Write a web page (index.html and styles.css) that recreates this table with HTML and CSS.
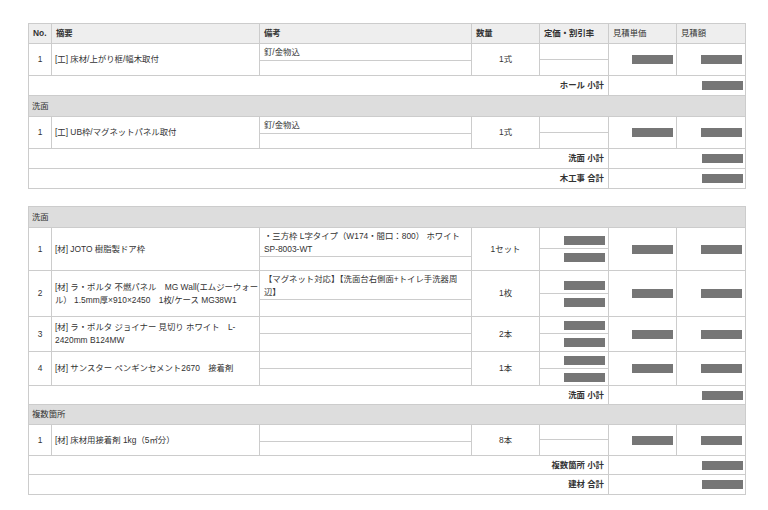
FILE: index.html
```html
<!DOCTYPE html>
<html lang="ja">
<head>
<meta charset="utf-8">
<title>見積明細</title>
<link rel="stylesheet" href="styles.css">
</head>
<body>
<div class="sheet">
  <div class="table">
    <div class="row head">
      <div class="cell">No.</div>
      <div class="cell">摘要</div>
      <div class="cell">備考</div>
      <div class="cell">数量</div>
      <div class="cell">定価・割引率</div>
      <div class="cell light">見積単価</div>
      <div class="cell light">見積額</div>
    </div>
    <div class="row item">
      <div class="cell no">1</div>
      <div class="cell desc">[工] 床材/上がり框/幅木取付</div>
      <div class="cell note"><div class="note-main">釘/金物込</div><div class="note-sub"></div></div>
      <div class="cell qty">1式</div>
      <div class="cell price"><div class="price-top"></div><div class="price-bottom"></div></div>
      <div class="cell amount"><span class="bar"></span></div>
      <div class="cell amount"><span class="bar"></span></div>
    </div>
    <div class="row sum">
      <div class="cell sum-label">ホール 小計</div>
      <div class="cell sum-value"><span class="bar"></span></div>
    </div>
    <div class="row section"><div class="cell">洗面</div></div>
    <div class="row item">
      <div class="cell no">1</div>
      <div class="cell desc">[工] UB枠/マグネットパネル取付</div>
      <div class="cell note"><div class="note-main">釘/金物込</div><div class="note-sub"></div></div>
      <div class="cell qty">1式</div>
      <div class="cell price"><div class="price-top"></div><div class="price-bottom"></div></div>
      <div class="cell amount"><span class="bar"></span></div>
      <div class="cell amount"><span class="bar"></span></div>
    </div>
    <div class="row sum">
      <div class="cell sum-label">洗面 小計</div>
      <div class="cell sum-value"><span class="bar"></span></div>
    </div>
    <div class="row sum">
      <div class="cell sum-label">木工事 合計</div>
      <div class="cell sum-value"><span class="bar"></span></div>
    </div>
  </div>

  <div class="table">
    <div class="row section"><div class="cell">洗面</div></div>
    <div class="row item">
      <div class="cell no">1</div>
      <div class="cell desc">[材] JOTO 樹脂製ドア枠</div>
      <div class="cell note"><div class="note-main">・三方枠 L字タイプ（W174・間口：800） ホワイト <span class="nowrap">SP-8003-WT</span></div><div class="note-sub"></div></div>
      <div class="cell qty">1セット</div>
      <div class="cell price"><div class="price-top"><span class="bar"></span></div><div class="price-bottom"><span class="bar"></span></div></div>
      <div class="cell amount"><span class="bar"></span></div>
      <div class="cell amount"><span class="bar"></span></div>
    </div>
    <div class="row item item-tall">
      <div class="cell no">2</div>
      <div class="cell desc"><div><span class="nowrap">[材] ラ・ポルタ 不燃パネル　MG Wall(エムジーウォー</span><br>ル）&nbsp;1.5mm厚×910×2450　1枚/ケース MG38W1</div></div>
      <div class="cell note"><div class="note-main">【マグネット対応】【洗面台右側面+トイレ手洗器周<br>辺】</div><div class="note-sub"></div></div>
      <div class="cell qty">1枚</div>
      <div class="cell price"><div class="price-top"><span class="bar"></span></div><div class="price-bottom"><span class="bar"></span></div></div>
      <div class="cell amount"><span class="bar"></span></div>
      <div class="cell amount"><span class="bar"></span></div>
    </div>
    <div class="row item">
      <div class="cell no">3</div>
      <div class="cell desc">[材] ラ・ポルタ ジョイナー 見切り ホワイト　L-2420mm B124MW</div>
      <div class="cell note"><div class="note-main"></div><div class="note-sub"></div></div>
      <div class="cell qty">2本</div>
      <div class="cell price"><div class="price-top"><span class="bar"></span></div><div class="price-bottom"><span class="bar"></span></div></div>
      <div class="cell amount"><span class="bar"></span></div>
      <div class="cell amount"><span class="bar"></span></div>
    </div>
    <div class="row item item-mid">
      <div class="cell no">4</div>
      <div class="cell desc">[材] サンスター ペンギンセメント2670　接着剤</div>
      <div class="cell note"><div class="note-main"></div><div class="note-sub"></div></div>
      <div class="cell qty">1本</div>
      <div class="cell price"><div class="price-top"><span class="bar"></span></div><div class="price-bottom"><span class="bar"></span></div></div>
      <div class="cell amount"><span class="bar"></span></div>
      <div class="cell amount"><span class="bar"></span></div>
    </div>
    <div class="row sum sum-short">
      <div class="cell sum-label">洗面 小計</div>
      <div class="cell sum-value"><span class="bar"></span></div>
    </div>
    <div class="row section section-short"><div class="cell">複数箇所</div></div>
    <div class="row item item-short">
      <div class="cell no">1</div>
      <div class="cell desc">[材] 床材用接着剤 1kg（5㎡分）</div>
      <div class="cell note"><div class="note-main"></div><div class="note-sub"></div></div>
      <div class="cell qty">8本</div>
      <div class="cell price"><div class="price-top"></div><div class="price-bottom"></div></div>
      <div class="cell amount"><span class="bar"></span></div>
      <div class="cell amount"><span class="bar"></span></div>
    </div>
    <div class="row sum sum-short">
      <div class="cell sum-label">複数箇所 小計</div>
      <div class="cell sum-value"><span class="bar"></span></div>
    </div>
    <div class="row sum">
      <div class="cell sum-label">建材 合計</div>
      <div class="cell sum-value"><span class="bar"></span></div>
    </div>
  </div>
</div>
</body>
</html>
```
FILE: styles.css
```css
* { box-sizing: border-box; }

body {
  margin: 0;
  background: #ffffff;
  font-family: "Liberation Sans", "Noto Sans CJK JP", sans-serif;
  font-size: 8.4px;
  line-height: 13px;
  color: #333333;
}

.sheet {
  padding: 23px 0 0 28px;
  display: flex;
  flex-direction: column;
  gap: 17px;
}

.table {
  width: 718px;
  border-left: 1px solid #cccccc;
  border-top: 1px solid #cccccc;
}

.row {
  display: grid;
  grid-template-columns: 23px 208px 212px 68px 69px 68px 69px;
}

.cell {
  border-right: 1px solid #cccccc;
  border-bottom: 1px solid #cccccc;
  display: flex;
  align-items: center;
  padding: 0 3px;
  min-width: 0;
}

.head .cell {
  height: 20px;
  background: #eeeeee;
  font-weight: bold;
  color: #333333;
  padding: 0 4px;
}

.head .light { font-weight: normal; }

.item { min-height: 32px; }
.item-tall { min-height: 46px; }
.item-mid { min-height: 34px; }
.item-short { min-height: 31px; }

.no { justify-content: center; }

.desc { padding: 4px 3px; }

.note {
  flex-direction: column;
  align-items: stretch;
  padding: 0;
}

.note-main { padding: 2px 4px 0; min-height: 16px; }

.nowrap { white-space: nowrap; }

.note-sub {
  flex: 1;
  min-height: 14px;
  border-top: 1px solid #cccccc;
}

.qty { justify-content: center; }

.price {
  flex-direction: column;
  align-items: stretch;
  padding: 0;
}

.price-top {
  flex: 1;
  display: flex;
  align-items: flex-end;
  justify-content: flex-end;
  padding: 0 3px 3px;
}

.price-bottom {
  flex: 1;
  border-top: 1px solid #cccccc;
  display: flex;
  align-items: flex-start;
  justify-content: flex-end;
  padding: 4px 3px 0;
}

.amount { justify-content: flex-end; padding: 0 3px; }

.bar {
  display: block;
  width: 41px;
  height: 9px;
  background: #767676;
}

.sum { grid-template-columns: 580px 137px; }

.sum .cell { height: 20px; }
.sum-short .cell { height: 19px; }

.sum-label {
  justify-content: flex-end;
  font-weight: bold;
  padding: 0 4px;
}

.sum-value { justify-content: flex-end; padding: 0 2px; }

.section { grid-template-columns: 1fr; }

.section .cell {
  height: 21px;
  background: #dddddd;
  padding: 0 3px;
}

.section-short .cell { height: 20px; }
```
